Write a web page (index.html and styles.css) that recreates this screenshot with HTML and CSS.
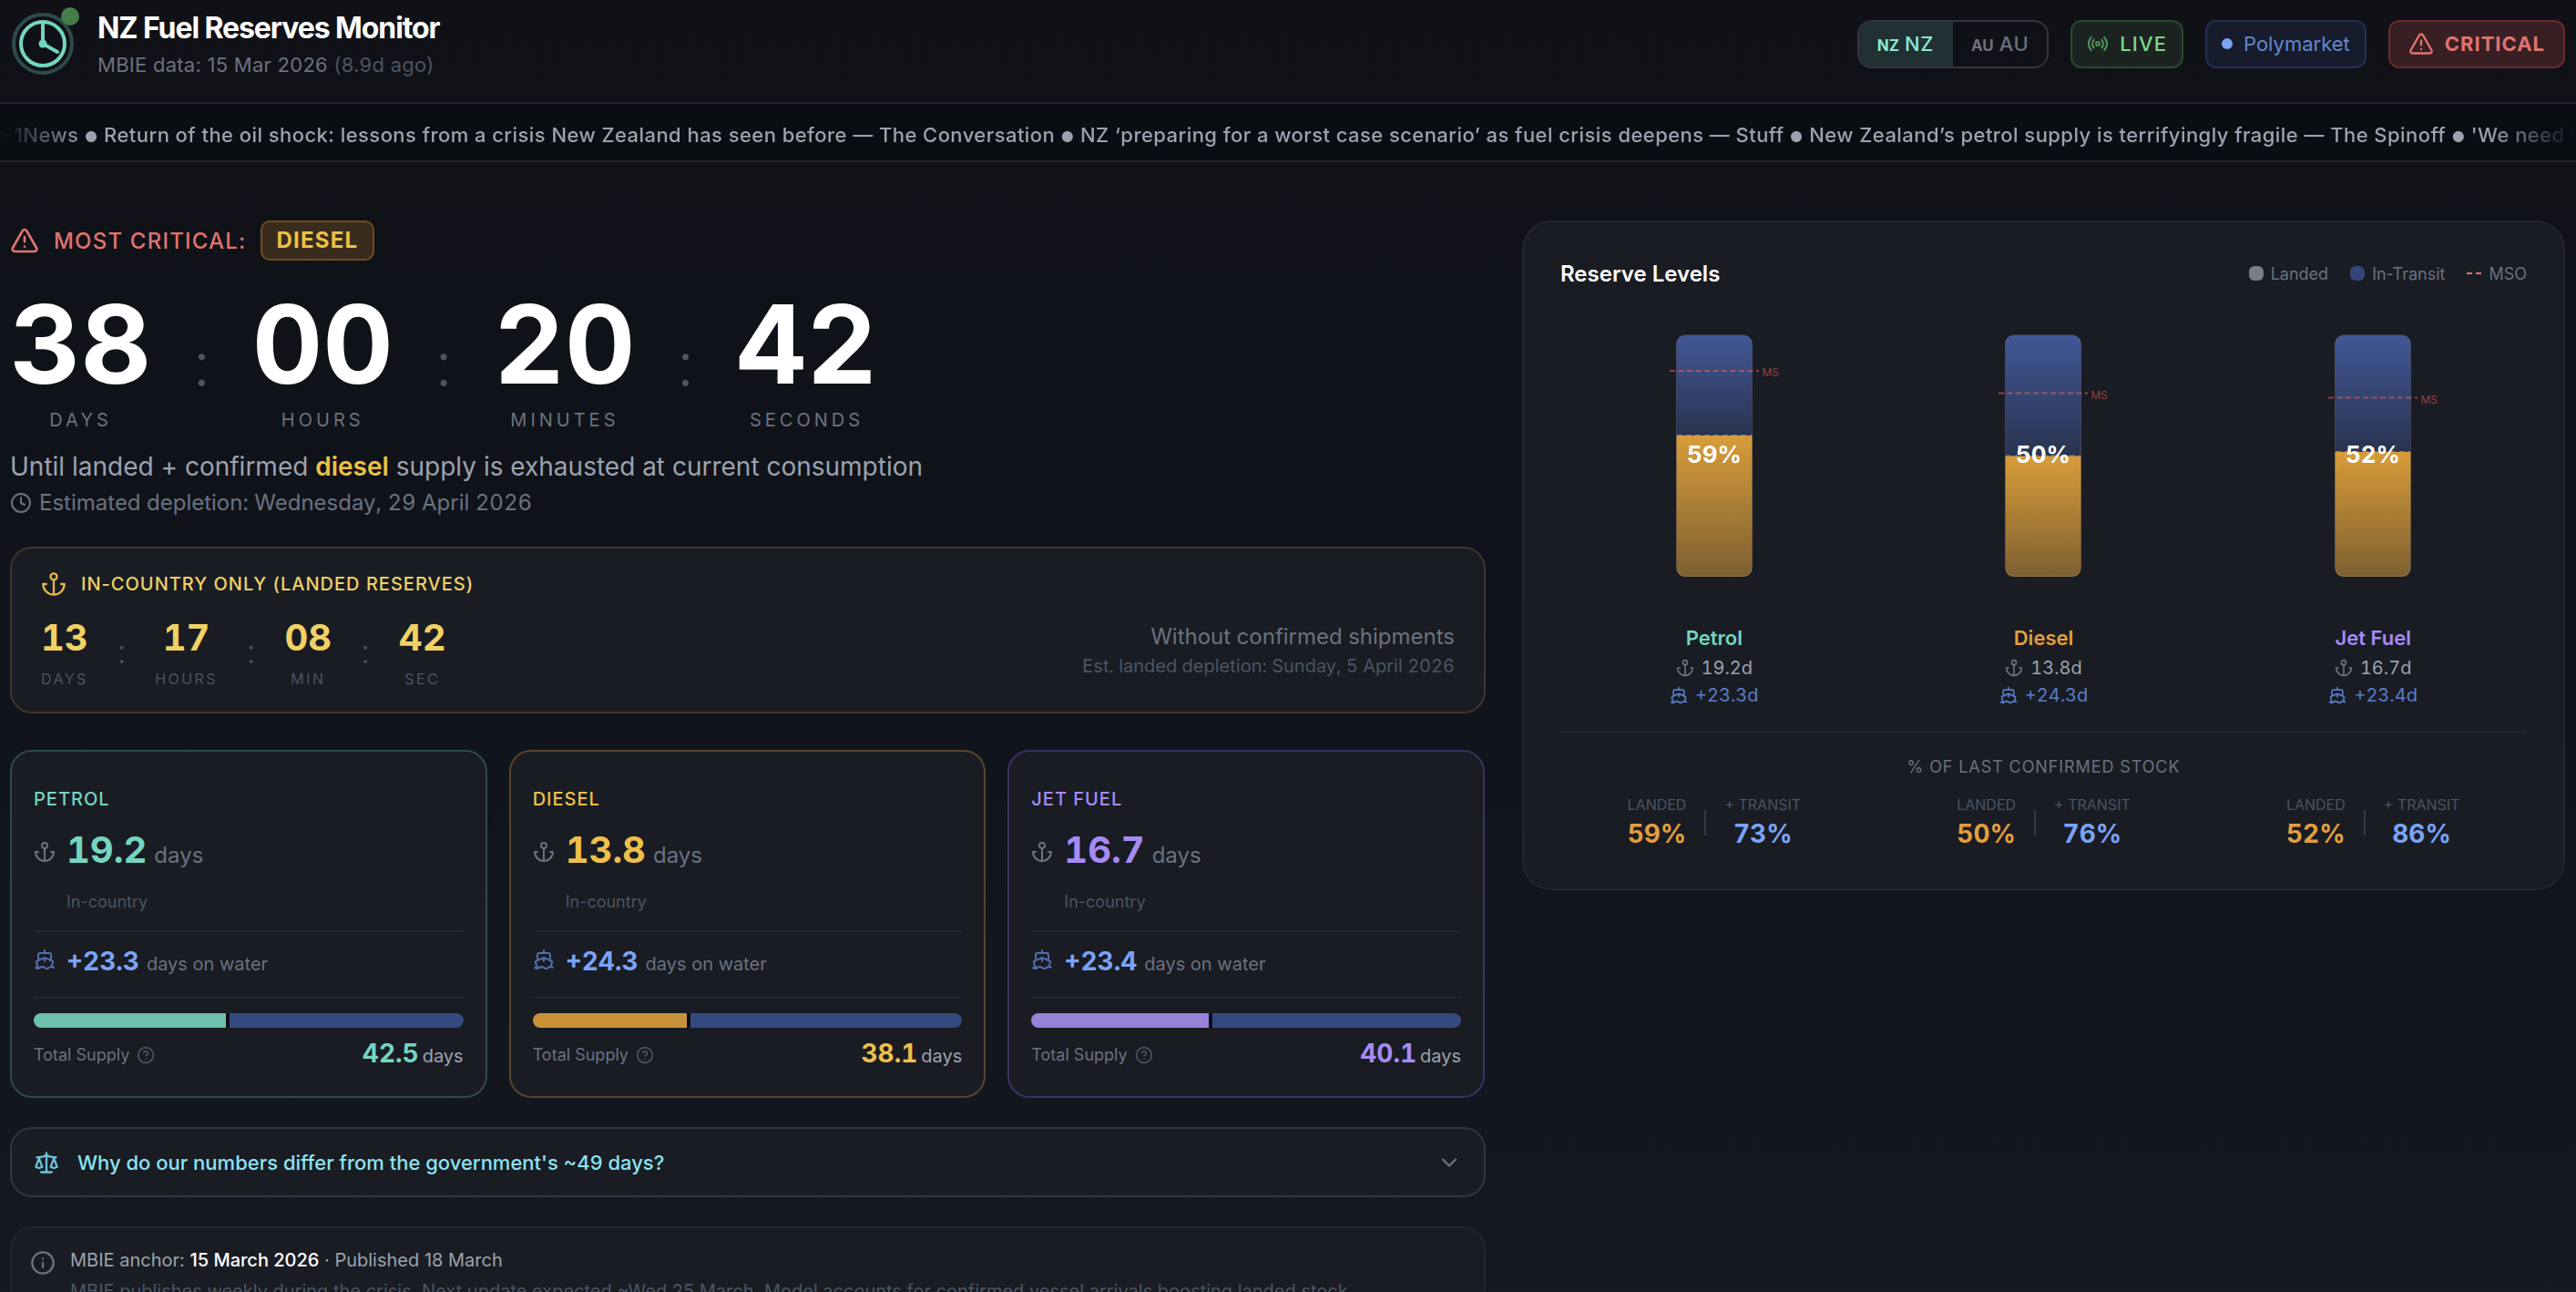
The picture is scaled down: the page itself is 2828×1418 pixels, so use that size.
FILE: index.html
```html
<!DOCTYPE html>
<html lang="en">
<head>
    <meta charset="UTF-8">
    <title>NZ Fuel Reserves Monitor</title>
    <link rel="stylesheet" href="styles.css">
</head>
<body>
    <!-- icon set -->
    <svg class="sprite" aria-hidden="true">
        <symbol id="i-alert" viewBox="0 0 24 24"><path d="m21.73 18-8-14a2 2 0 0 0-3.48 0l-8 14A2 2 0 0 0 4 21h16a2 2 0 0 0 1.73-3M12 9v4M12 17h.01"/></symbol>
        <symbol id="i-radio" viewBox="0 0 24 24"><path d="M4.9 19.1C1 15.2 1 8.8 4.9 4.9M7.8 16.2c-2.3-2.3-2.3-6.1 0-8.5M16.2 7.8c2.3 2.3 2.3 6.1 0 8.5M19.1 4.9C23 8.8 23 15.1 19.1 19"/><circle cx="12" cy="12" r="2"/></symbol>
        <symbol id="i-clock" viewBox="0 0 24 24"><circle cx="12" cy="12" r="10"/><path d="M12 6v6l4 2"/></symbol>
        <symbol id="i-anchor" viewBox="0 0 24 24"><circle cx="12" cy="5" r="3"/><path d="M12 22V8M5 12H2a10 10 0 0 0 20 0h-3"/></symbol>
        <symbol id="i-ship" viewBox="0 0 24 24"><path d="M12 10.189V14M12 2v3M19 13V7a2 2 0 0 0-2-2H7a2 2 0 0 0-2 2v6M19.38 20A11.6 11.6 0 0 0 21 14l-8.188-3.639a2 2 0 0 0-1.624 0L3 14a11.6 11.6 0 0 0 2.81 7.76M2 21c.6.5 1.2 1 2.5 1 2.5 0 2.5-2 5-2 1.3 0 1.9.5 2.5 1s1.2 1 2.5 1c2.5 0 2.5-2 5-2 1.3 0 1.9.5 2.5 1"/></symbol>
        <symbol id="i-help" viewBox="0 0 24 24"><circle cx="12" cy="12" r="10"/><path d="M9.09 9a3 3 0 0 1 5.83 1c0 2-3 3-3 3M12 17h.01"/></symbol>
        <symbol id="i-info" viewBox="0 0 24 24"><circle cx="12" cy="12" r="10"/><path d="M12 16v-4M12 8h.01"/></symbol>
        <symbol id="i-scale" viewBox="0 0 24 24"><path d="m16 16 3-8 3 8c-.87.65-1.92 1-3 1s-2.13-.35-3-1ZM2 16l3-8 3 8c-.87.65-1.92 1-3 1s-2.13-.35-3-1ZM7 21h10M12 3v18M3 7h2c2 0 5-1 7-2 2 1 5 2 7 2h2"/></symbol>
        <symbol id="i-down" viewBox="0 0 24 24"><path d="m6 9 6 6 6-6"/></symbol>
        <linearGradient id="g-transit" x1="0" y1="0" x2="0" y2="1"><stop offset="0" stop-color="#415796"/><stop offset="1" stop-color="#29334f"/></linearGradient>
        <linearGradient id="g-landed" x1="0" y1="0" x2="0" y2="1"><stop offset="0" stop-color="#d89c3a"/><stop offset="1" stop-color="#7d5f31"/></linearGradient>
        <clipPath id="tank"><rect x="38.5" y="8" width="83" height="265" rx="9"/></clipPath>
    </svg>

    <header class="header">
        <svg class="logo" viewBox="0 0 72 72" fill="none">
            <circle cx="36" cy="36" r="32" stroke="#2d4b49" stroke-width="4"/>
            <circle cx="36" cy="36" r="24" stroke="#75d5c0" stroke-width="4"/>
            <path d="M36 14v22l16 9" stroke="#75d5c0" stroke-width="4" stroke-linecap="round" stroke-linejoin="round"/>
            <circle cx="36" cy="36" r="4.5" fill="#75d5c0"/>
            <circle cx="66" cy="6" r="10" fill="#477b47"/>
        </svg>
        <div class="brand">
            <h1>NZ Fuel Reserves Monitor</h1>
            <p>MBIE data: 15 Mar 2026 <span>(8.9d ago)</span></p>
        </div>
        <div class="actions">
            <div class="toggle">
                <span class="active"><small>NZ</small>NZ</span>
                <span><small>AU</small>AU</span>
            </div>
            <div class="pill live"><svg class="icon s24"><use href="#i-radio"/></svg>LIVE</div>
            <div class="pill poly"><i class="dot"></i>Polymarket</div>
            <div class="pill crit"><svg class="icon s28"><use href="#i-alert"/></svg>CRITICAL</div>
        </div>
    </header>

    <div class="ticker">
        <p>— 1News <i>●</i> Return of the oil shock: lessons from a crisis New Zealand has seen before — The Conversation <i>●</i> NZ ‘preparing for a worst case scenario’ as fuel crisis deepens — Stuff <i>●</i> New Zealand’s petrol supply is terrifyingly fragile — The Spinoff <i>●</i> 'We need to</p>
    </div>

    <main class="main">
        <section class="left">
            <div class="critical">
                <svg class="icon s32"><use href="#i-alert"/></svg>
                <span>MOST CRITICAL:</span>
                <b>DIESEL</b>
            </div>
            <div class="countdown">
                <div class="unit"><b>38</b><span>DAYS</span></div>
                <i>:</i>
                <div class="unit"><b>00</b><span>HOURS</span></div>
                <i>:</i>
                <div class="unit"><b>20</b><span>MINUTES</span></div>
                <i>:</i>
                <div class="unit"><b>42</b><span>SECONDS</span></div>
            </div>
            <p class="until">Until landed + confirmed <b>diesel</b> supply is exhausted at current consumption</p>
            <p class="depletion"><svg class="icon s24"><use href="#i-clock"/></svg>Estimated depletion: Wednesday, 29 April 2026</p>

            <div class="card landed">
                <h2><svg class="icon s28"><use href="#i-anchor"/></svg>IN-COUNTRY ONLY (LANDED RESERVES)</h2>
                <div class="landed_row">
                    <div class="countdown small">
                        <div class="unit"><b>13</b><span>DAYS</span></div>
                        <i>:</i>
                        <div class="unit"><b>17</b><span>HOURS</span></div>
                        <i>:</i>
                        <div class="unit"><b>08</b><span>MIN</span></div>
                        <i>:</i>
                        <div class="unit"><b>42</b><span>SEC</span></div>
                    </div>
                    <div class="landed_note">
                        <p>Without confirmed shipments</p>
                        <p class="sub">Est. landed depletion: Sunday, 5 April 2026</p>
                    </div>
                </div>
            </div>

            <div class="fuels">
                <div class="card fuel petrol">
                    <h3>PETROL</h3>
                    <div class="stock"><svg class="icon s24"><use href="#i-anchor"/></svg><b>19.2</b><span>days</span></div>
                    <p class="where">In-country</p>
                    <div class="water"><svg class="icon s24"><use href="#i-ship"/></svg><b>+23.3</b><span>days on water</span></div>
                    <div class="bar"><i style="flex-grow: 19.2"></i><i style="flex-grow: 23.3"></i></div>
                    <div class="total"><span class="label">Total Supply<svg class="icon s20"><use href="#i-help"/></svg></span><span><b>42.5</b>days</span></div>
                </div>
                <div class="card fuel diesel">
                    <h3>DIESEL</h3>
                    <div class="stock"><svg class="icon s24"><use href="#i-anchor"/></svg><b>13.8</b><span>days</span></div>
                    <p class="where">In-country</p>
                    <div class="water"><svg class="icon s24"><use href="#i-ship"/></svg><b>+24.3</b><span>days on water</span></div>
                    <div class="bar"><i style="flex-grow: 13.8"></i><i style="flex-grow: 24.3"></i></div>
                    <div class="total"><span class="label">Total Supply<svg class="icon s20"><use href="#i-help"/></svg></span><span><b>38.1</b>days</span></div>
                </div>
                <div class="card fuel jet">
                    <h3>JET FUEL</h3>
                    <div class="stock"><svg class="icon s24"><use href="#i-anchor"/></svg><b>16.7</b><span>days</span></div>
                    <p class="where">In-country</p>
                    <div class="water"><svg class="icon s24"><use href="#i-ship"/></svg><b>+23.4</b><span>days on water</span></div>
                    <div class="bar"><i style="flex-grow: 16.7"></i><i style="flex-grow: 23.4"></i></div>
                    <div class="total"><span class="label">Total Supply<svg class="icon s20"><use href="#i-help"/></svg></span><span><b>40.1</b>days</span></div>
                </div>
            </div>

            <div class="card faq">
                <svg class="icon s28"><use href="#i-scale"/></svg>
                <span>Why do our numbers differ from the government's ~49 days?</span>
                <svg class="icon s28 chevron"><use href="#i-down"/></svg>
            </div>

            <div class="card anchor_info">
                <svg class="icon s28"><use href="#i-info"/></svg>
                <div>
                    <p>MBIE anchor: <b>15 March 2026</b> · Published 18 March</p>
                    <p class="sub">MBIE publishes weekly during the crisis. Next update expected ~Wed 25 March. Model accounts for confirmed vessel arrivals boosting landed stock.</p>
                </div>
            </div>
        </section>

        <aside class="card levels">
            <div class="levels_head">
                <h2>Reserve Levels</h2>
                <ul class="legend">
                    <li><i class="sw_landed"></i>Landed</li>
                    <li><i class="sw_transit"></i>In-Transit</li>
                    <li><i class="sw_mso"></i>MSO</li>
                </ul>
            </div>
            <div class="tanks">
                <div class="tank petrol">
                    <svg class="tank_svg" viewBox="0 0 160 280">
                        <g clip-path="url(#tank)">
                            <rect x="38" y="8" width="84" height="110" fill="url(#g-transit)"/>
                            <rect x="38" y="118" width="84" height="155" fill="url(#g-landed)"/>
                            <path class="edge" d="M39 117.5h82"/>
                        </g>
                        <rect class="rim" x="38.5" y="7.5" width="83" height="265" rx="10"/>
                        <path class="mso" d="M31 47h98"/>
                        <text class="mso_text" x="132.5" y="53">MS</text>
                        <text class="pct" x="80" y="148">59%</text>
                    </svg>
                    <h4>Petrol</h4>
                    <p><svg class="icon s20"><use href="#i-anchor"/></svg>19.2d</p>
                    <p class="ship"><svg class="icon s20"><use href="#i-ship"/></svg>+23.3d</p>
                </div>
                <div class="tank diesel">
                    <svg class="tank_svg" viewBox="0 0 160 280">
                        <g clip-path="url(#tank)">
                            <rect x="38" y="8" width="84" height="133" fill="url(#g-transit)"/>
                            <rect x="38" y="140.5" width="84" height="132.5" fill="url(#g-landed)"/>
                            <path class="edge" d="M39 140h82"/>
                        </g>
                        <rect class="rim" x="38.5" y="7.5" width="83" height="265" rx="10"/>
                        <path class="mso" d="M31 71.5h98"/>
                        <text class="mso_text" x="132.5" y="77.5">MS</text>
                        <text class="pct" x="80" y="148">50%</text>
                    </svg>
                    <h4>Diesel</h4>
                    <p><svg class="icon s20"><use href="#i-anchor"/></svg>13.8d</p>
                    <p class="ship"><svg class="icon s20"><use href="#i-ship"/></svg>+24.3d</p>
                </div>
                <div class="tank jet">
                    <svg class="tank_svg" viewBox="0 0 160 280">
                        <g clip-path="url(#tank)">
                            <rect x="38" y="8" width="84" height="128" fill="url(#g-transit)"/>
                            <rect x="38" y="136" width="84" height="137" fill="url(#g-landed)"/>
                            <path class="edge" d="M39 135.5h82"/>
                        </g>
                        <rect class="rim" x="38.5" y="7.5" width="83" height="265" rx="10"/>
                        <path class="mso" d="M31 76.5h98"/>
                        <text class="mso_text" x="132.5" y="82.5">MS</text>
                        <text class="pct" x="80" y="148">52%</text>
                    </svg>
                    <h4>Jet Fuel</h4>
                    <p><svg class="icon s20"><use href="#i-anchor"/></svg>16.7d</p>
                    <p class="ship"><svg class="icon s20"><use href="#i-ship"/></svg>+23.4d</p>
                </div>
            </div>
            <h5>% OF LAST CONFIRMED STOCK</h5>
            <div class="shares">
                <div class="share"><p>LANDED<b>59%</b></p><i></i><p class="ship">+ TRANSIT<b>73%</b></p></div>
                <div class="share"><p>LANDED<b>50%</b></p><i></i><p class="ship">+ TRANSIT<b>76%</b></p></div>
                <div class="share"><p>LANDED<b>52%</b></p><i></i><p class="ship">+ TRANSIT<b>86%</b></p></div>
            </div>
        </aside>
    </main>
</body>
</html>
```
FILE: styles.css
```css
*{box-sizing: border-box;}
body,h1,h2,h3,h4,h5,p,ul{margin: 0;padding: 0;}
body{
    height: 1418px;
    overflow: hidden;
    font-family: Inter, "Liberation Sans", sans-serif;
    font-size: 20px;
    color: #9ca3af;
    background: linear-gradient(#101116, #0f1218 22%, #10131b 45%, #131821);
}
li{list-style: none;}
i{font-style: normal;}
svg{display: block;flex: none;}
.sprite{
    position: absolute;
    width: 0;
    height: 0;
}
.icon{
    fill: none;
    stroke: currentColor;
    stroke-width: 2;
    stroke-linecap: round;
    stroke-linejoin: round;
}
.s20{width: 20px;height: 20px;}
.s24{width: 24px;height: 24px;}
.s28{width: 28px;height: 28px;}
.s32{width: 32px;height: 32px;}

/* header */
.header{
    display: flex;
    align-items: center;
    height: 114px;
    padding: 9px 12px 25px 11px;
    border-bottom: 2px solid #23262c;
}
.logo{
    width: 72px;
    height: 72px;
    margin-right: 24px;
    overflow: visible;
}
.brand h1{
    padding-top: 1px;
    font-size: 32px;
    line-height: 40px;
    font-weight: 700;
    letter-spacing: -0.034em;
    color: #fff;
}
.brand p{
    margin-top: 4px;
    font-size: 22px;
    line-height: 32px;
    letter-spacing: 0.012em;
    color: #6b7280;
}
.brand p span{color: #4b5563;}
.actions{
    display: flex;
    gap: 24px;
    margin-left: auto;
    font-size: 22px;
    font-weight: 500;
    letter-spacing: 0.025em;
}
.toggle{
    display: flex;
    height: 53px;
    border: 2px solid #33363c;
    border-radius: 16px;
    overflow: hidden;
    color: #6b7280;
}
.toggle span{
    display: flex;
    align-items: center;
    gap: 6px;
    padding: 0 20px;
}
.toggle small{
    padding-top: 3px;
    font-size: 17px;
    font-weight: 700;
    letter-spacing: 0;
}
.toggle .active{
    padding: 0 21px 0 20px;
    color: #8ce8d3;
    background: #203033;
}
.pill{
    display: flex;
    align-items: center;
    gap: 12px;
    height: 53px;
    padding: 0 16px;
    border: 2px solid;
    border-radius: 12px;
}
.live{
    color: #7fd88a;
    background: #1b2320;
    border-color: #274a2d;
    letter-spacing: 0.05em;
}
.live .icon{color: #4f9359;}
.poly{
    color: #6488d0;
    background: #161c2b;
    border-color: #223058;
    font-weight: 400;
    letter-spacing: 0;
}
.dot{
    width: 12px;
    height: 12px;
    border-radius: 50%;
    background: #7ba4f7;
}
.crit{
    padding: 0 20px;
    color: #e0736f;
    background: #381f23;
    border-color: #6b2a2c;
    font-weight: 700;
    letter-spacing: 0.045em;
}

/* news ticker */
.ticker{
    height: 64px;
    padding-top: 16px;
    overflow: hidden;
    background: #0a0d12;
    border-bottom: 2px solid #23262c;
}
.ticker p{
    margin-left: -13px;
    font-size: 22px;
    line-height: 36px;
    font-weight: 500;
    letter-spacing: 0.02em;
    white-space: nowrap;
    -webkit-mask-image: linear-gradient(90deg, transparent 12px, #000 108px, #000 2744px, transparent 2840px);
    mask-image: linear-gradient(90deg, transparent 12px, #000 108px, #000 2744px, transparent 2840px);
}
.ticker i{font-size: 16px;}

.main{
    display: grid;
    grid-template-columns: 1620px 1145px;
    gap: 40px;
    align-items: start;
    padding: 64px 11px 0;
}
.card{
    background: #191c23;
    border: 2px solid #23262c;
    border-radius: 24px;
}

/* main countdown */
.critical{
    display: flex;
    align-items: center;
    gap: 16px;
    height: 44px;
    font-size: 24px;
    font-weight: 500;
    letter-spacing: 0.05em;
    color: #e0736f;
}
.critical b{
    height: 44px;
    margin-left: -1px;
    padding: 0 16px;
    line-height: 40px;
    font-weight: 700;
    color: #eec145;
    background: #3a2c1d;
    border: 2px solid #6b4d22;
    border-radius: 10px;
}
.countdown{
    display: flex;
    align-items: flex-start;
    margin-top: 31px;
}
.unit{
    display: flex;
    flex-direction: column;
    align-items: center;
}
.countdown b{
    font-size: 120px;
    line-height: 122px;
    font-weight: 700;
    font-variant-numeric: tabular-nums;
    color: #fff;
}
.unit span{
    margin-top: 8px;
    line-height: 28px;
    letter-spacing: 0.2em;
    color: #6b7280;
}
.countdown>i{
    width: 110.5px;
    margin-top: 48px;
    font-size: 68px;
    line-height: 68px;
    font-weight: 300;
    text-align: center;
    color: #4b5563;
}
.until{
    margin-top: 16px;
    font-size: 28px;
    line-height: 42px;
}
.until b{
    font-weight: 600;
    color: #eec145;
}
.depletion{
    display: flex;
    align-items: center;
    gap: 8px;
    margin-top: 1px;
    font-size: 24px;
    line-height: 36px;
    font-variant-numeric: tabular-nums;
    color: #6b7280;
}

/* landed only */
.landed{
    height: 183px;
    margin-top: 30px;
    padding: 24px 32px;
    border-color: #40352a;
}
.landed h2{
    display: flex;
    align-items: center;
    gap: 16px;
    font-size: 20px;
    line-height: 30px;
    font-weight: 500;
    letter-spacing: 0.05em;
    color: #f0d264;
}
.landed h2 .icon{color: #e6b645;}
.landed_row{
    display: flex;
    justify-content: space-between;
    margin-top: 24px;
}
.small{margin-top: 0;}
.small b{
    font-size: 40px;
    line-height: 40px;
    color: #f0d264;
}
.small .unit span{
    margin-top: 13px;
    font-size: 16px;
    line-height: 25px;
    letter-spacing: 0.15em;
    color: #4b5563;
}
.small>i{
    width: 73.6px;
    margin-top: 17px;
    font-size: 36px;
    line-height: 36px;
}
.landed_note{
    padding-top: 1px;
    text-align: right;
    font-size: 24px;
    line-height: 35px;
    font-variant-numeric: tabular-nums;
    color: #6b7280;
}
.landed_note .sub{
    font-size: 20px;
    line-height: 30px;
    color: #4b5563;
}

/* fuel cards */
.fuels{
    display: grid;
    grid-template-columns: repeat(3, 1fr);
    gap: 24px;
    margin: 40px 1px 0 0;
}
.fuel{
    height: 382px;
    padding: 37px 24px 0;
}
.fuel.petrol{border-color: #2d4b49;}
.fuel.diesel{border-color: #58452a;}
.fuel.jet{border-color: #3b3163;}
.petrol h3,.petrol .stock b,.petrol .total b,.petrol h4{color: #75d5c0;}
.diesel h3,.diesel .stock b,.diesel .total b{color: #eec04a;}
.diesel h4{color: #e39f3c;}
.jet h3,.jet .stock b,.jet .total b,.jet h4{color: #a78bf5;}
.fuel h3{
    font-size: 20px;
    line-height: 30px;
    font-weight: 500;
    letter-spacing: 0.05em;
}
.fuel b{font-variant-numeric: tabular-nums;}
.stock,.water{
    display: flex;
    align-items: baseline;
    gap: 8px;
    color: #6b7280;
}
.stock{
    height: 40px;
    margin-top: 21px;
    font-size: 24px;
    line-height: 40px;
}
.stock b{font-size: 40px;}
.stock .icon,.water .icon{
    align-self: center;
    margin: 4px 4px 0 0;
}
.where{
    margin: 23px 0 18px;
    padding-left: 36px;
    font-size: 18px;
    line-height: 27px;
    color: #4b5563;
}
.water{
    height: 75px;
    padding: 11px 0 18px;
    line-height: 42px;
    border: solid #23262d;
    border-width: 2px 0;
}
.water b{
    font-size: 28px;
    color: #7ba4f7;
}
.water .icon{
    margin: 0 4px 4px 0;
    color: #526fae;
}
.bar{
    display: flex;
    gap: 4px;
    height: 16px;
    margin: 16px 0 8px;
    border-radius: 8px;
    overflow: hidden;
    background: #0d0f14;
}
.bar i{
    flex-basis: 0;
    background: #34497f;
}
.petrol .bar i:first-child{background: #6dbfae;}
.diesel .bar i:first-child{background: #c99238;}
.jet .bar i:first-child{background: #9783da;}
.total{
    display: flex;
    justify-content: space-between;
    align-items: center;
    height: 42px;
    line-height: 42px;
}
.total b{
    margin-right: 4px;
    font-size: 28px;
}
.total .label{
    display: flex;
    align-items: center;
    gap: 8px;
    padding-top: 2px;
    font-size: 18px;
    color: #6b7280;
}
.total .icon{color: #4b5563;}

/* footer cards */
.faq{
    display: flex;
    align-items: center;
    gap: 20px;
    height: 77px;
    margin-top: 32px;
    padding: 0 24px;
    border-color: #33363c;
    font-size: 22px;
    font-weight: 500;
    color: #8be4f2;
}
.faq .icon{color: #6cc3dc;}
.faq .chevron{
    margin-left: auto;
    color: #6b7280;
}
.anchor_info{
    display: flex;
    gap: 16px;
    margin-top: 32px;
    padding: 20px;
    line-height: 30px;
}
.anchor_info .icon{
    margin-top: 4px;
    color: #6b7280;
}
.anchor_info b{
    font-weight: 500;
    color: #fff;
}
.anchor_info .sub{
    margin-top: 4px;
    color: #4b5563;
}

/* reserve levels */
.levels{
    height: 735px;
    padding: 38px 40px 0;
    border-radius: 32px;
}
.levels_head{
    display: flex;
    justify-content: space-between;
    align-items: center;
    height: 36px;
}
.levels_head h2{
    font-size: 24px;
    font-weight: 600;
    color: #fff;
}
.legend{
    display: flex;
    gap: 24px;
    font-size: 18px;
    color: #6b7280;
}
.legend li{
    display: flex;
    align-items: center;
    gap: 8px;
}
.legend i{
    width: 16px;
    height: 16px;
    border-radius: 6px;
}
.sw_landed{background: #7b7e87;}
.sw_transit{background: #34457a;}
.legend .sw_mso{
    height: 2px;
    border-radius: 0;
    background: linear-gradient(90deg, #e0736f 6px, transparent 6px, transparent 10px, #e0736f 10px);
}
.tanks,.shares{
    display: grid;
    grid-template-columns: repeat(3, 1fr);
    gap: 24px;
}
.tanks{
    margin-top: 42px;
    padding-bottom: 24px;
    border-bottom: 2px solid #23262d;
}
.tank{
    display: flex;
    flex-direction: column;
    align-items: center;
}
.tank_svg{
    width: 160px;
    height: 280px;
}
.rim{
    fill: none;
    stroke: #fff;
    stroke-opacity: 0.12;
}
.edge{
    stroke: #fff;
    stroke-opacity: 0.35;
    stroke-dasharray: 6 4;
}
.mso{
    stroke: #e0605e;
    stroke-opacity: 0.6;
    stroke-width: 2;
    stroke-dasharray: 6 3.5;
}
.mso_text{
    font-size: 12px;
    fill: #e0605e;
    fill-opacity: 0.6;
}
.pct{
    font-size: 26px;
    font-weight: 700;
    font-variant-numeric: tabular-nums;
    text-anchor: middle;
    fill: #fff;
}
.tank h4{
    margin-top: 44px;
    padding-bottom: 1px;
    font-size: 22px;
    line-height: 33px;
    font-weight: 600;
}
.tank p{
    display: flex;
    align-items: center;
    gap: 8px;
    line-height: 30px;
    font-variant-numeric: tabular-nums;
}
.tank .icon{color: #6b7280;}
.tank .ship,.tank .ship .icon{color: #5a7dc9;}
.levels h5{
    margin: 24px 0 16px;
    font-size: 18px;
    line-height: 27px;
    font-weight: 400;
    letter-spacing: 0.05em;
    text-align: center;
    color: #6b7280;
}
.share{
    display: flex;
    justify-content: center;
    align-items: center;
    gap: 20px;
}
.share i{
    width: 2px;
    height: 28px;
    background: #343b49;
}
.share p{
    font-size: 16px;
    line-height: 24px;
    text-align: center;
    color: #4b5563;
}
.share b{
    display: block;
    font-size: 28px;
    line-height: 40px;
    font-variant-numeric: tabular-nums;
    color: #e39f3c;
}
.share .ship b{color: #7ba4f7;}
```
